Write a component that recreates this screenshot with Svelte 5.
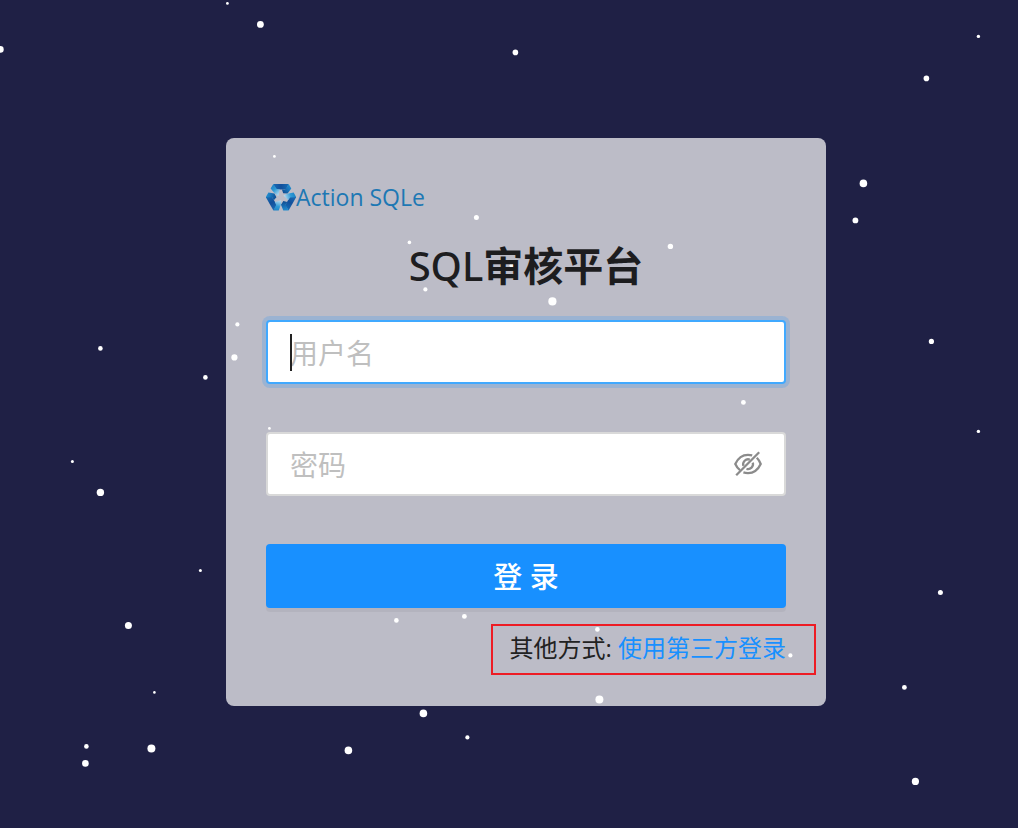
<script>
  // x, y, radius
  const stars = [
    [227, 3, 1.4], [260, 24, 3.4], [0, 49, 3.3], [515, 52, 2.8], [978, 36, 1.7],
    [926, 78, 2.8], [274, 156, 1.4], [476, 217, 2.5], [409, 242, 1.8], [670, 246, 2.7],
    [863, 183, 3.8], [855, 220, 2.9], [425, 289, 2.1], [552, 301, 4.1], [511, 265, 2],
    [237, 324, 2.1], [234, 357, 3.1], [100, 348, 2.3], [205, 377, 2.3], [931, 341, 2.6],
    [743, 402, 2.4], [269, 428, 1.4], [978, 431, 1.7], [72, 461, 1.5], [100, 492, 3.7],
    [200, 570, 1.5], [128, 625, 3.5], [396, 620, 2.3], [464, 616, 2.4], [597, 629, 2.3],
    [790, 655, 2.1], [940, 592, 2.5], [904, 687, 2.4], [154, 692, 1.3], [599, 699, 4],
    [423, 713, 3.8], [467, 737, 2.1], [86, 746, 2.3], [85, 763, 3.3], [151, 748, 4],
    [348, 750, 3.8], [915, 781, 3.6]
  ];
  const turns = [0, 120, 240];
  let username = $state('');
  let password = $state('');
  let visible = $state(false);
</script>

<main>
  <svg class="sky" aria-hidden="true">
    {#each stars as [x, y, r]}
      <circle cx={x + 0.4} cy={y + 0.4} {r} fill="#fff" />
    {/each}
  </svg>

  <form class="card" onsubmit={(e) => e.preventDefault()}>
    <div class="brand">
      <svg viewBox="0 0 30 27" width="30" height="27" aria-hidden="true">
        <defs>
          <linearGradient id="bar" x1="0" x2="1">
            <stop offset="0" stop-color="#1b6bb4" />
            <stop offset=".5" stop-color="#124f9b" />
            <stop offset="1" stop-color="#176db4" />
          </linearGradient>
          <linearGradient id="leg" x1="0" y1="0" x2=".8" y2="1">
            <stop offset="0" stop-color="#1578bd" />
            <stop offset=".5" stop-color="#2f9ad6" />
            <stop offset="1" stop-color="#c0def0" />
          </linearGradient>
          <linearGradient id="fold" x1="1" y1="0" x2="0" y2="1">
            <stop offset="0" stop-color="#2a9cda" />
            <stop offset=".5" stop-color="#1872b8" />
            <stop offset="1" stop-color="#0e4488" />
          </linearGradient>
        </defs>
        {#each turns as turn}
          <g transform="rotate({turn} 15 13.2)">
            <path d="M7.3 0H22.7L20 5.6H10Z" fill="url(#bar)" />
            <path d="M7.3 0L4.6 4.6L8.8 9.6L12.2 12L13.9 5.5L10.8 5.1Z" fill="url(#leg)" />
            <path d="M22.7 0L25.3 4.6L21.6 9.4L17.2 9.2L15.9 5.4H19.2Z" fill="url(#fold)" />
          </g>
        {/each}
      </svg>
      <span>Action SQLe</span>
    </div>

    <h1><span>SQL</span>审核平台</h1>

    <div class="field active">
      <input type="text" aria-label="用户名" placeholder="用户名" bind:value={username} />
      <i class="caret"></i>
    </div>

    <div class="field">
      <input type={visible ? 'text' : 'password'} aria-label="密码" placeholder="密码" bind:value={password} />
      <button type="button" class="eye" aria-label="显示密码" onclick={() => (visible = !visible)}>
        <svg viewBox="0 0 28 28" width="28" height="28" fill="none" stroke="#8b8b8b" stroke-width="2.3">
          <path d="M18.2 5.4Q16.2 4.9 14 4.9Q5.5 4.9 1.3 14Q3 17.8 6 20.2" />
          <path d="M22.8 7.8Q25.3 10.3 26.7 14Q22.5 23.1 14 23.1Q11.5 23.1 9.4 22.4" />
          <path d="M15.8 9.6A5 5 0 0 0 9.4 15.9M18.8 12.6A5 5 0 0 1 12.5 18.8" />
          <path d="M2.2 25.2L25.2 2.2" />
        </svg>
      </button>
    </div>

    <button type="submit" class="submit">登 录</button>

    <p class="other">其他方式: <a href="#oauth">使用第三方登录</a></p>
  </form>
</main>

<style>
  :global(body) {
    margin: 0;
    background: #1f2045;
  }
  main {
    position: relative;
    box-sizing: border-box;
    min-height: 100vh;
    padding: 16px 0 0 34px;
    display: flex;
    align-items: center;
    justify-content: center;
    overflow: hidden;
    font-family: "Open Sans", "Noto Sans CJK SC", sans-serif;
    color: #222;
  }
  .sky {
    position: absolute;
    inset: 0;
    width: 100%;
    height: 100%;
  }
  .card {
    position: relative;
    box-sizing: border-box;
    width: 100%;
    max-width: 600px;
    padding: 40px 40px 24px;
    border-radius: 8px;
    background: rgba(255, 255, 255, 0.7);
  }
  .brand {
    display: flex;
    align-items: center;
    height: 38px;
    font-size: 23px;
    line-height: 38px;
    color: #1d78b4;
  }
  h1 {
    margin: 20px 0 24px;
    font-size: 40px;
    line-height: 60px;
    font-weight: 700;
    text-align: center;
    color: #1d1d1f;
  }
  h1 span {
    font-family: "Noto Sans", "Open Sans", sans-serif;
    font-weight: 500;
  }
  .field {
    position: relative;
    display: flex;
    align-items: center;
    box-sizing: border-box;
    height: 64px;
    margin-bottom: 48px;
    border: 2px solid #d9d9d9;
    border-radius: 4px;
    background: #fff;
  }
  .active {
    border-color: #40a9ff;
    box-shadow: 0 0 0 4px rgba(24, 144, 255, 0.2);
  }
  input {
    flex: 1;
    min-width: 0;
    padding: 2px 22px 0;
    border: 0;
    outline: 0;
    background: none;
    font: 28px/40px "Open Sans", "Noto Sans CJK SC", sans-serif;
    color: #222;
  }
  input::placeholder {
    color: #bfbfbf;
    opacity: 1;
  }
  .caret {
    position: absolute;
    left: 22px;
    top: 12px;
    width: 2px;
    height: 37px;
    background: #222;
  }
  .active:focus-within .caret {
    display: none;
  }
  .eye {
    display: flex;
    padding: 0;
    margin-right: 22px;
    border: 0;
    background: none;
    cursor: pointer;
  }
  .submit {
    display: block;
    width: 100%;
    height: 64px;
    padding: 2px 0 0;
    border: 0;
    border-radius: 4px;
    background: #1890ff;
    box-shadow: 0 4px 0 rgba(0, 0, 0, 0.045);
    font: 500 29px/62px "Open Sans", "Noto Sans CJK SC", sans-serif;
    color: #fff;
    cursor: pointer;
  }
  .other {
    width: fit-content;
    box-sizing: border-box;
    margin: 16px -30px 7px auto;
    padding: 0 28px 3px 16px;
    border: 2px solid #ed1c24;
    font-size: 24px;
    line-height: 44px;
    white-space: nowrap;
  }
  .other a {
    color: #1890ff;
    text-decoration: none;
  }
</style>
